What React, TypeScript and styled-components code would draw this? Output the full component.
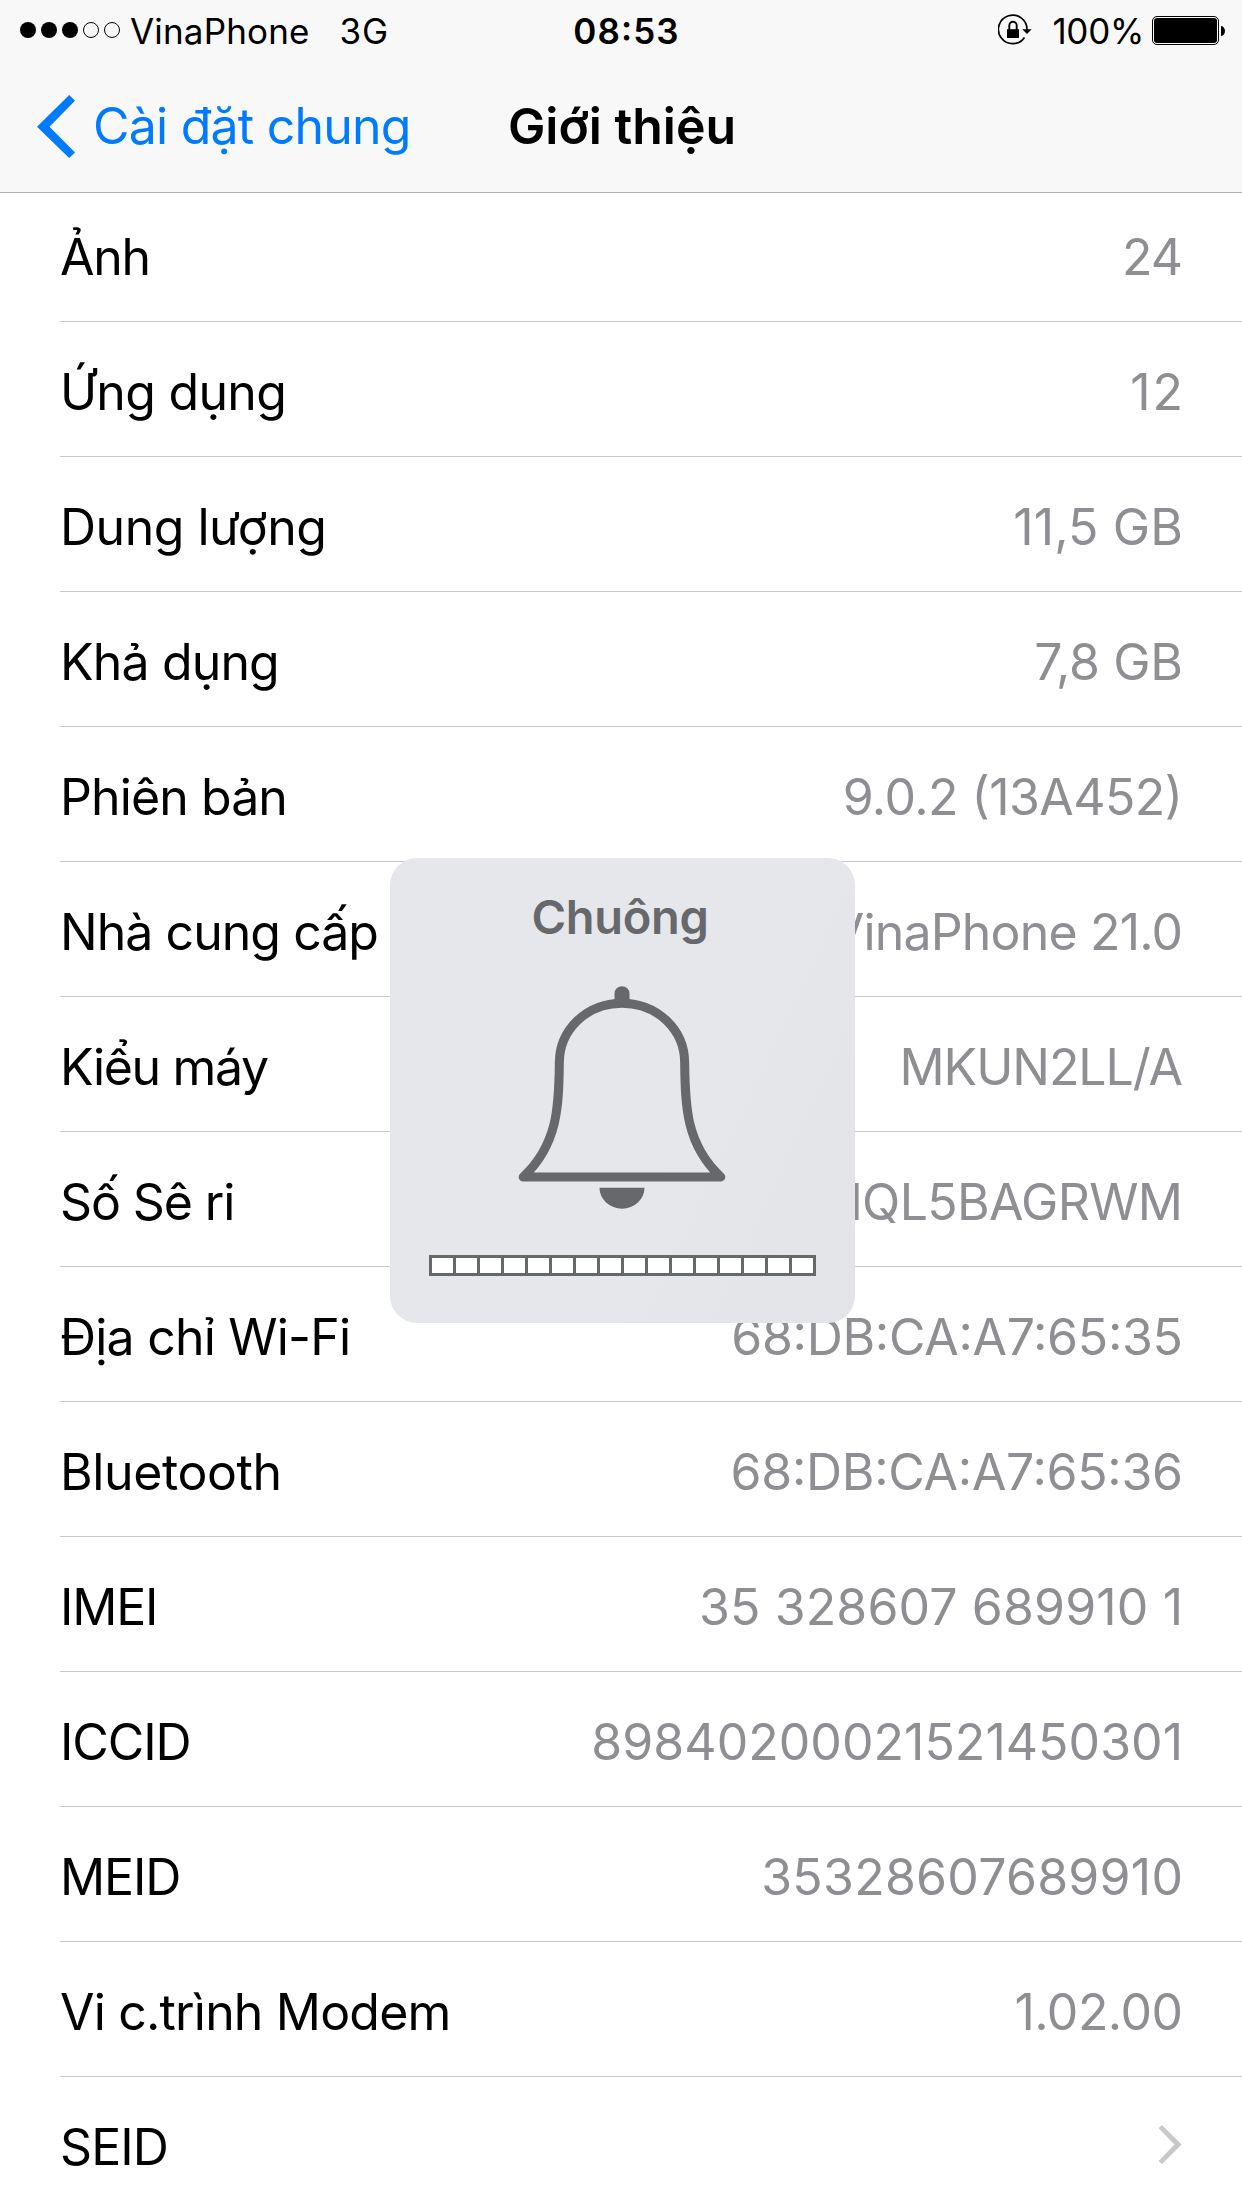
import React from 'react';
import styled, { createGlobalStyle } from 'styled-components';

const GlobalStyle = createGlobalStyle`
  *, *::before, *::after { box-sizing: border-box; }
  body {
    margin: 0;
    background: #fff;
    font-family: Inter, Roboto, sans-serif;
    font-feature-settings: "calt" 1;
    color: #000;
  }
`;

const Screen = styled.div`
  position: relative;
  display: flex;
  flex-direction: column;
  width: 1242px;
  height: 2208px;
  overflow: hidden;
  background: #fff;
`;

const Header = styled.header`
  flex: none;
  z-index: 1;
  display: flex;
  flex-direction: column;
  height: 193px;
  background: #f8f8f8;
  border-bottom: 1px solid #b2b2b2;
`;

const StatusBar = styled.div`
  display: grid;
  grid-template-columns: 1fr auto 1fr;
  align-items: center;
  height: 60px;
  padding: 0 17px 0 20px;
  font-size: 35px;
`;

const StatusGroup = styled.div<{ $end?: boolean }>`
  display: flex;
  align-items: center;
  justify-content: ${(p) => (p.$end ? 'flex-end' : 'flex-start')};
`;

const StatusText = styled.span<{ $before?: number; $after?: number; $track?: number }>`
  padding-top: 1px;
  margin-left: ${(p) => p.$before ?? 0}px;
  margin-right: ${(p) => p.$after ?? 0}px;
  letter-spacing: ${(p) => p.$track ?? 0}px;
  white-space: nowrap;
`;

const Clock = styled(StatusText)`
  padding-left: 8px;
  font-weight: 600;
`;

const NavBar = styled.nav`
  display: grid;
  grid-template-columns: 1fr auto 1fr;
  align-items: center;
  height: 132px;
  font-size: 50px;
`;

const BackButton = styled.a`
  display: flex;
  align-items: center;
  gap: 17px;
  padding-left: 36px;
  color: #007aff;
  letter-spacing: -0.78px;
  white-space: nowrap;
`;

const Title = styled.h1`
  margin: 0;
  padding-left: 2px;
  font-size: 50px;
  font-weight: 600;
`;

const List = styled.ul`
  flex: none;
  margin: -6px 0 0;
  padding: 0 0 0 60px;
  list-style: none;
  font-size: 50px;
`;

const Row = styled.li`
  display: flex;
  align-items: center;
  justify-content: space-between;
  height: 135px;
  padding: 6px 59px 0 0;
  border-bottom: 1px solid #c8c7cc;
  white-space: nowrap;
`;

const Label = styled.span<{ $track: number }>`
  letter-spacing: ${(p) => p.$track}px;
`;

const Value = styled.span<{ $track: number }>`
  margin-right: ${(p) => -p.$track}px;
  color: #8e8e93;
  letter-spacing: ${(p) => p.$track}px;
`;

const Disclosure = styled.svg`
  display: block;
  margin: 0 1px 4px 0;
`;

const VolumeHud = styled.div`
  position: absolute;
  z-index: 2;
  top: 858px;
  left: 390px;
  display: flex;
  flex-direction: column;
  align-items: center;
  width: 465px;
  height: 465px;
  padding-top: 29px;
  border-radius: 27px;
  background: linear-gradient(115deg, #e5e7eb 60%, #e2e4e8 100%);
  color: #67686c;
`;

const HudTitle = styled.div`
  height: 60px;
  margin-right: 5px;
  font-size: 47px;
  font-weight: 600;
  line-height: 60px;
  letter-spacing: -0.31px;
`;

const Bell = styled.svg`
  display: block;
  margin: 39px 1px 0 0;
`;

const VolumeTrack = styled.div`
  display: flex;
  gap: 3px;
  margin-top: 45px;
  padding: 3px;
  background: #67686c;
`;

const VolumeStep = styled.span`
  width: 21px;
  height: 15px;
  background: #fff;
`;

type Item = { label: string; labelTrack: number; value?: string; valueTrack?: number };

const items: Item[] = [
  { label: 'Ảnh', labelTrack: -1.3, value: '24', valueTrack: -1 },
  { label: 'Ứng dụng', labelTrack: -0.7, value: '12', valueTrack: 2 },
  { label: 'Dung lượng', labelTrack: -0.5, value: '11,5 GB', valueTrack: 0.14 },
  { label: 'Khả dụng', labelTrack: -0.85, value: '7,8 GB', valueTrack: -0.33 },
  { label: 'Phiên bản', labelTrack: -0.9, value: '9.0.2 (13A452)', valueTrack: -0.55 },
  { label: 'Nhà cung cấp', labelTrack: -0.96, value: 'VinaPhone 21.0', valueTrack: -0.83 },
  { label: 'Kiểu máy', labelTrack: -1.34, value: 'MKUN2LL/A', valueTrack: -1.06 },
  { label: 'Số Sê ri', labelTrack: -1.1, value: 'NQL5BAGRWM', valueTrack: -0.68 },
  { label: 'Địa chỉ Wi-Fi', labelTrack: -0.8, value: '68:DB:CA:A7:65:35', valueTrack: -0.3 },
  { label: 'Bluetooth', labelTrack: -0.4, value: '68:DB:CA:A7:65:36', valueTrack: -0.3 },
  { label: 'IMEI', labelTrack: -1.22, value: '35 328607 689910 1', valueTrack: 0.13 },
  { label: 'ICCID', labelTrack: -1.1, value: '89840200021521450301', valueTrack: 0.04 },
  { label: 'MEID', labelTrack: -1.1, value: '35328607689910', valueTrack: 0.25 },
  { label: 'Vi c.trình Modem', labelTrack: -0.82, value: '1.02.00', valueTrack: -0.53 },
  { label: 'SEID', labelTrack: -0.9 },
];

const SignalDots = () => (
  <svg width="100" height="16" viewBox="0 0 100 16">
    {[0, 1, 2, 3, 4].map((i) => (
      <circle
        key={i}
        cx={8 + i * 21}
        cy="8"
        r={i < 3 ? 8 : 7.5}
        fill={i < 3 ? '#000' : 'none'}
        stroke={i < 3 ? 'none' : '#000'}
      />
    ))}
  </svg>
);

const RotationLock = () => (
  <svg width="34" height="32" viewBox="0 0 34 32">
    <path d="M29 16 A14.3 14.3 0 1 0 26.5 23.5" fill="none" stroke="#000" strokeWidth="1.7" />
    <path d="M24.3 15.3 H33.7 L29 20 Z" />
    <rect x="9" y="15.2" width="12" height="8.8" />
    <path d="M11.3 16 V11.5 A3.7 3.7 0 0 1 18.7 11.5 V16" fill="none" stroke="#000" strokeWidth="1.9" />
  </svg>
);

const Battery = () => (
  <svg width="73" height="29" viewBox="0 0 73 29">
    <rect x="0.5" y="0.5" width="66" height="28" rx="4.5" fill="none" stroke="#000" />
    <rect x="2" y="2" width="63" height="25" rx="3" />
    <path d="M69 10 C74.3 10.5 74.3 19.5 69 20 Z" />
  </svg>
);

export default function App() {
  return (
    <>
      <GlobalStyle />
      <Screen>
        <Header>
          <StatusBar>
            <StatusGroup>
              <SignalDots />
              <StatusText $before={10} $track={0.17}>VinaPhone</StatusText>
              <StatusText $before={30} $track={0.88}>3G</StatusText>
            </StatusGroup>
            <Clock $track={1.08}>08:53</Clock>
            <StatusGroup $end>
              <RotationLock />
              <StatusText $before={20} $after={8} $track={-0.3}>100%</StatusText>
              <Battery />
            </StatusGroup>
          </StatusBar>
          <NavBar>
            <BackButton>
              <svg width="40" height="64" viewBox="0 0 40 64">
                <path d="M1 32.7 L33.2 1 L39 6.8 L13.5 32.7 L39 58.4 L33.2 64 Z" fill="#007aff" />
              </svg>
              Cài đặt chung
            </BackButton>
            <Title>Giới thiệu</Title>
          </NavBar>
        </Header>
        <List>
          {items.map((item) => (
            <Row key={item.label}>
              <Label $track={item.labelTrack}>{item.label}</Label>
              {item.value ? (
                <Value $track={item.valueTrack ?? 0}>{item.value}</Value>
              ) : (
                <Disclosure width="24" height="40" viewBox="0 0 24 40">
                  <path d="M0.6 3.3 L3.9 0 L23.6 19.6 L3.9 39.2 L0.6 35.9 L16.4 19.6 Z" fill="#c7c7cc" />
                </Disclosure>
              )}
            </Row>
          ))}
        </List>
        <VolumeHud>
          <HudTitle>Chuông</HudTitle>
          <Bell width="208" height="224" viewBox="415.5 439 624 672">
            <path
              d="M705 490 V462 A22.5 22.5 0 0 1 750 462 V490 Z"
              fill="#67686c"
            />
            <path
              d="M431 1012 C535 915 538 800 539.5 670 C539.5 570 622 490.5 727.5 490.5 S915.5 570 915.5 670 C917 800 920 915 1024 1012 Z"
              fill="none"
              stroke="#67686c"
              strokeWidth="27"
              strokeLinejoin="round"
            />
            <path d="M660 1044 H795 A67.5 63 0 0 1 660 1044 Z" fill="#67686c" />
          </Bell>
          <VolumeTrack>
            {Array.from({ length: 16 }, (_, i) => (
              <VolumeStep key={i} />
            ))}
          </VolumeTrack>
        </VolumeHud>
      </Screen>
    </>
  );
}
